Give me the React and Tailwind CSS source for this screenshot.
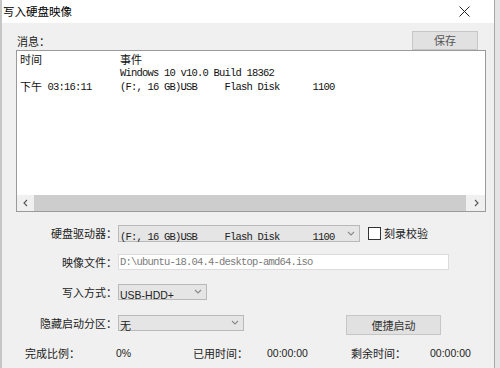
const cjk = "font-['Noto_Sans_CJK_SC','Noto_Sans',sans-serif]";
const mono = "font-['Liberation_Mono','Noto_Sans_CJK_SC',monospace] text-[10.5px] tracking-[-0.8px]";

const Chevron = ({ dir = "down", className = "" }) => {
  const pts = {
    down: "1,2 4,5 7,2",
    left: "5,1 2,4 5,7",
    right: "3,1 6,4 3,7",
  }[dir];
  return (
    <svg width="8" height="8" viewBox="0 0 8 8" className={className}>
      <polyline points={pts} fill="none" stroke="currentColor" strokeWidth="1.1" />
    </svg>
  );
};

const Select = ({ width, children }) => (
  <div
    className={`flex items-center justify-between h-full bg-[#e5e5e5] border border-[#b9b9b9] pl-[1px] pr-[4px] ${width}`}
  >
    <span className="whitespace-pre leading-none">{children}</span>
    <Chevron className="text-[#8a8a8a]" />
  </div>
);

const Label = ({ children }) => (
  <div className={`w-[116px] text-right pr-[1px] text-[11px] leading-none text-[#222] ${cjk}`}>
    {children}
  </div>
);

export default function App() {
  return (
    <div className={`w-[500px] h-[368px] bg-[#f0f0f0] flex overflow-hidden ${cjk}`}>
      <div className="w-[2px] bg-[#c6c6c6]" />
      <div className="flex-1 flex flex-col">
        {/* title bar */}
        <div className="h-[23px] bg-white flex items-center justify-between pl-[1px] pr-[24px]">
          <span className="text-[11.5px] text-black leading-none">写入硬盘映像</span>
          <svg width="11" height="11" viewBox="0 0 11 11">
            <path d="M0.5 0.5 L10.5 10.5 M10.5 0.5 L0.5 10.5" stroke="#222" strokeWidth="1" />
          </svg>
        </div>

        <div className="pl-[14px] pr-[8px]">
          <div className="flex items-end justify-between mt-[8px] pr-[8px]">
            <span className="text-[11px] text-[#222] leading-none pl-[1px] pb-[3px]">消息：</span>
            <button className="w-[66px] h-[19px] bg-[#e1e1e1] border border-[#c6c6c6] text-[11px] text-[#555] leading-none">
              保存
            </button>
          </div>

          {/* log list */}
          <div className="h-[162px] bg-white border border-[#9a9a9a] flex flex-col">
            <div className="flex-1 pt-[2px] pl-[3px] text-[#111]">
              <div className="flex h-[13.5px] items-center">
                <span className="w-[100px] text-[11px] leading-none">时间</span>
                <span className="text-[11px] leading-none">事件</span>
              </div>
              <div className="flex h-[13.5px] items-center">
                <span className="w-[100px]" />
                <span className={`${mono} whitespace-pre leading-none`}>Windows 10 v10.0 Build 18362</span>
              </div>
              <div className="flex h-[13.5px] items-center">
                <span className="w-[100px] flex items-center leading-none">
                  <span className="text-[11px]">下午</span>
                  <span className={`${mono} whitespace-pre`}> 03:16:11</span>
                </span>
                <span className={`${mono} whitespace-pre leading-none`}>
                  (F:, 16 GB)USB     Flash Disk      1100
                </span>
              </div>
            </div>
            <div className="h-[16px] flex">
              <div className="w-[17px] bg-[#f0f0f0] flex items-center justify-center text-[#555]">
                <Chevron dir="left" />
              </div>
              <div className="flex-1 bg-[#cdcdcd]" />
              <div className="w-[19px] bg-[#f0f0f0] flex items-center justify-center text-[#555]">
                <Chevron dir="right" />
              </div>
            </div>
          </div>
        </div>

        {/* form */}
        <div className="flex flex-col">
          <div className="flex items-center h-[17px] mt-[13px]">
            <Label>硬盘驱动器：</Label>
            <Select width="w-[242px]">
              <span className={`${mono} text-[#222]`}>(F:, 16 GB)USB     Flash Disk      1100</span>
            </Select>
            <div className="ml-[8px] w-[13px] h-[13px] bg-white border border-[#333]" />
            <span className="ml-[3px] text-[11px] leading-none text-[#222]">刻录校验</span>
          </div>

          <div className="flex items-center h-[16px] mt-[12px]">
            <Label>映像文件：</Label>
            <div className="w-[331px] h-full bg-white border border-[#dcdcdc] flex items-center pl-[1px]">
              <span className={`${mono} text-[#7a7a7a] leading-none whitespace-pre`}>
                D:\ubuntu-18.04.4-desktop-amd64.iso
              </span>
            </div>
          </div>

          <div className="flex items-center h-[16px] mt-[14px]">
            <Label>写入方式：</Label>
            <Select width="w-[89px]">
              <span className="text-[10.5px] text-[#222] font-['Liberation_Sans',sans-serif]">USB-HDD+</span>
            </Select>
          </div>

          <div className="flex items-start h-[20px] mt-[15px]">
            <Label>
              <span className="block pt-[3px]">隐藏启动分区：</span>
            </Label>
            <div className="h-[16px] flex">
              <Select width="w-[126px]">
                <span className="text-[11px] text-[#222]">无</span>
              </Select>
            </div>
            <button className="ml-[102px] w-[95px] h-[20px] bg-[#e1e1e1] border border-[#c6c6c6] text-[11px] text-[#333] leading-none">
              便捷启动
            </button>
          </div>

          <div className="flex items-center mt-[13px] pl-[23px] text-[11px] leading-none text-[#222]">
            <span className="w-[91px]">完成比例：</span>
            <span className="w-[77px] font-['Liberation_Sans',sans-serif] text-[10.5px]">0%</span>
            <span className="w-[74px]">已用时间：</span>
            <span className="w-[84px] font-['Liberation_Sans',sans-serif] text-[10.5px]">00:00:00</span>
            <span className="w-[79px]">剩余时间：</span>
            <span className="font-['Liberation_Sans',sans-serif] text-[10.5px]">00:00:00</span>
          </div>
        </div>
      </div>
      <div className="w-[1px] bg-[#a8a8a8]" />
      <div className="w-[5px] bg-[#e4e4e4]" />
    </div>
  );
}
